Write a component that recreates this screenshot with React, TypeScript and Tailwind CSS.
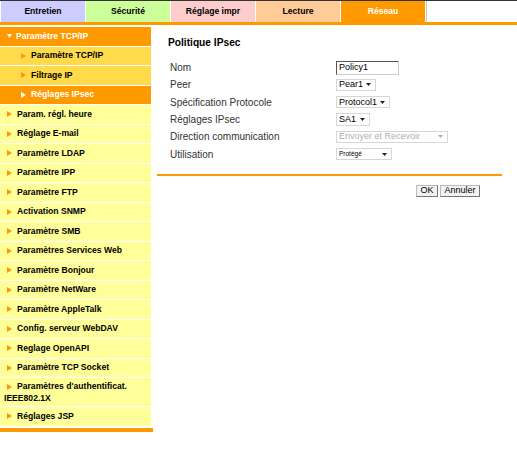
import React from "react";

const tabs = [
    { label: "Entretien", bg: "bg-[#ccccff]", text: "text-black" },
    { label: "Sécurité", bg: "bg-[#ccff99]", text: "text-black" },
    { label: "Réglage impr", bg: "bg-[#ffcccc]", text: "text-black" },
    { label: "Lecture", bg: "bg-[#ffcc99]", text: "text-black" },
    { label: "Réseau", bg: "bg-[#ff9900]", text: "text-white" },
];

const menuItems = [
    "Param. régl. heure",
    "Réglage E-mail",
    "Paramètre LDAP",
    "Paramètre IPP",
    "Paramètre FTP",
    "Activation SNMP",
    "Paramètre SMB",
    "Paramètres Services Web",
    "Paramètre Bonjour",
    "Paramètre NetWare",
    "Paramètre AppleTalk",
    "Config. serveur WebDAV",
    "Reglage OpenAPI",
    "Paramètre TCP Socket",
];

function Arrow({ color }: { color: string }) {
    return (
        <svg width="5" height="6" viewBox="0 0 5 6" className="inline-block shrink-0">
            <path d="M0 0L5 3L0 6Z" fill={color} />
        </svg>
    );
}

function Select({ value, width, small, disabled }: { value: string; width: string; small?: boolean; disabled?: boolean }) {
    return (
        <div
            className={`flex items-center justify-between h-[12.5px] pl-[2px] pr-[4px] bg-white border border-[#d6d6d6] ${width}`}
        >
            <span
                className={`leading-none ${small ? "text-[6.5px]" : "text-[9px]"} ${disabled ? "text-[#b0b0b0]" : "text-black"}`}
            >
                {value}
            </span>
            <svg width="5" height="3" viewBox="0 0 5 3">
                <path d="M0 0H5L2.5 3Z" fill={disabled ? "#b0b0b0" : "#222"} />
            </svg>
        </div>
    );
}

export default function App() {
    const rows: { label: string; control: React.ReactNode }[] = [
        {
            label: "Nom",
            control: (
                <div className="w-[63px] h-[14px] flex items-center pl-[2px] bg-white border border-t-[#555] border-l-[#555] border-b-[#ccc] border-r-[#ccc] text-[9px] leading-none">
                    Policy1
                </div>
            ),
        },
        { label: "Peer", control: <Select value="Pear1" width="w-[40px]" /> },
        { label: "Spécification Protocole", control: <Select value="Protocol1" width="w-[54px]" /> },
        { label: "Réglages IPsec", control: <Select value="SA1" width="w-[34px]" /> },
        { label: "Direction communication", control: <Select value="Envoyer et Recevoir" width="w-[112px]" disabled /> },
        { label: "Utilisation", control: <Select value="Protégé" width="w-[56px]" small /> },
    ];

    return (
        <div className="w-[517px] h-[468px] bg-white font-['Liberation_Sans',Arial,sans-serif] overflow-hidden">
            {/* Tabs */}
            <div className="border-t border-[#333] flex h-[22px] pl-[1px] gap-[1px]">
                {tabs.map((t) => (
                    <div
                        key={t.label}
                        className={`w-[84px] flex items-center justify-center text-[8.6px] font-bold ${t.bg} ${t.text}`}
                    >
                        {t.label}
                    </div>
                ))}
                <div className="flex-1 border-l border-[#c8c8c8] bg-white" />
            </div>
            <div className="h-[3px] bg-[#ff9900]" />

            <div className="flex mt-[2px]">
                {/* Sidebar */}
                <div className="w-[153px] shrink-0">
                    <div className="w-[151px] flex flex-col gap-[1px] text-[8.6px] font-bold">
                        <div className="h-[18.5px] bg-[#ff9900] text-white flex items-center pl-[7px] gap-[4px]">
                            <svg width="5" height="4" viewBox="0 0 5 4">
                                <path d="M0 0H5L2.5 4Z" fill="#fff" />
                            </svg>
                            Paramètre TCP/IP
                        </div>
                        <div className="h-[18.5px] bg-[#ffda4a] flex items-center pl-[21px] gap-[5px]">
                            <Arrow color="#ff9900" />
                            Paramètre TCP/IP
                        </div>
                        <div className="h-[18.5px] bg-[#ffda4a] flex items-center pl-[21px] gap-[5px]">
                            <Arrow color="#ff9900" />
                            Filtrage IP
                        </div>
                        <div className="h-[18.5px] bg-[#ff9900] text-white flex items-center pl-[21px] gap-[5px]">
                            <Arrow color="#fff" />
                            Réglages IPsec
                        </div>
                        {menuItems.map((m) => (
                            <div key={m} className="h-[18.5px] bg-[#ffff99] flex items-center pl-[7px] gap-[5px]">
                                <Arrow color="#ff9900" />
                                {m}
                            </div>
                        ))}
                        <div className="h-[28px] bg-[#ffff99] pl-[4px] pt-[3px] leading-[11.5px]">
                            <span className="inline-block w-[3px]" />
                            <Arrow color="#ff9900" />
                            <span className="ml-[5px]">Paramètres d'authentificat.</span> IEEE802.1X
                        </div>
                        <div className="h-[18.5px] bg-[#ffff99] flex items-center pl-[7px] gap-[5px]">
                            <Arrow color="#ff9900" />
                            Réglages JSP
                        </div>
                    </div>
                    <div className="h-[4px] bg-[#ff9900] mt-[2px]" />
                </div>

                {/* Content */}
                <div className="w-[345px] ml-[4px] pt-[9px]">
                    <h1 className="pl-[11px] text-[10.2px] font-bold text-black leading-[14px]">Politique IPsec</h1>
                    <div className="mt-[9px] flex flex-col">
                        {rows.map((r) => (
                            <div key={r.label} className="h-[17.3px] flex items-center">
                                <div className="w-[179px] pl-[13px] text-[10px] text-[#333]">{r.label}</div>
                                {r.control}
                            </div>
                        ))}
                    </div>
                    <div className="mt-[11px] h-[2px] bg-[#ff9900]" />
                    <div className="mt-[9px] flex pl-[259px] gap-[2px]">
                        <button className="w-[22px] h-[12px] flex items-center justify-center text-[9px] leading-none bg-[#f2f2f2] border border-[#bbb] border-r-[#777] border-b-[#777]">
                            OK
                        </button>
                        <button className="w-[40px] h-[12px] flex items-center justify-center text-[9px] leading-none bg-[#f2f2f2] border border-[#bbb] border-r-[#777] border-b-[#777]">
                            Annuler
                        </button>
                    </div>
                </div>
            </div>
        </div>
    );
}
